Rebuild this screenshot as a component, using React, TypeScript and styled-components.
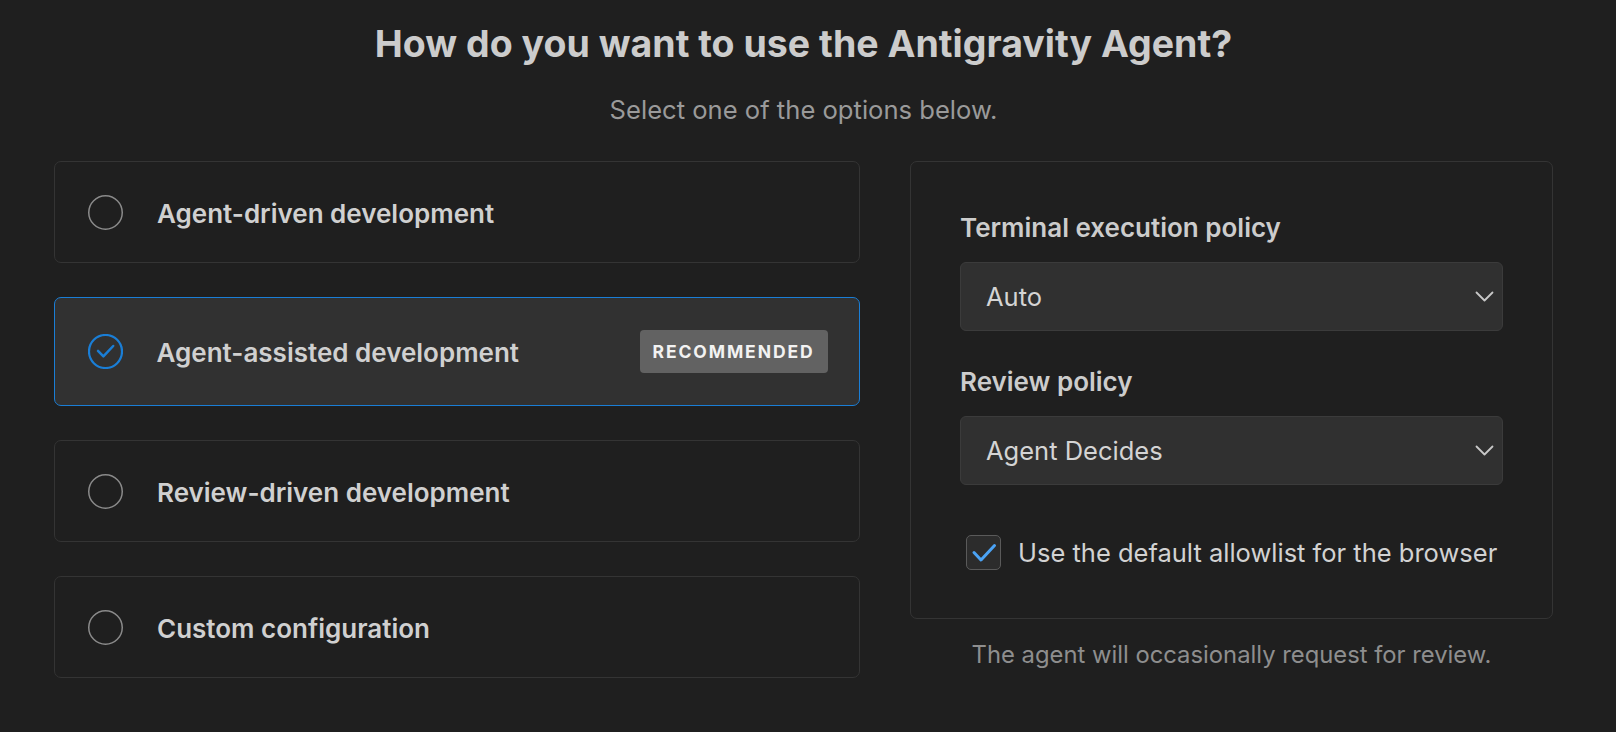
import React from 'react';
import styled, { createGlobalStyle } from 'styled-components';

const GlobalStyle = createGlobalStyle`
  body {
    margin: 0;
    background: #1f1f1f;
    font-family: Inter, "Noto Sans", sans-serif;
  }
`;

const Page = styled.div`
  width: 1499px;
  margin-left: 54px;
  padding-top: 21px;
  color: #cccccc;
`;

const Title = styled.h1`
  margin: 0;
  text-align: center;
  font-size: 37.5px;
  line-height: 46px;
  font-weight: 700;
  color: #cccccc;
`;

const Subtitle = styled.p`
  margin: 27px 0 0;
  text-align: center;
  font-size: 25.6px;
  line-height: 32px;
  color: #9a9a9a;
`;

const Columns = styled.div`
  display: grid;
  grid-template-columns: 806px 643px;
  column-gap: 50px;
  align-items: start;
  margin-top: 35px;
`;

const OptionList = styled.div`
  display: flex;
  flex-direction: column;
  gap: 34px;
`;

const OptionCard = styled.div<{ $selected?: boolean }>`
  display: flex;
  align-items: center;
  gap: 34px;
  min-height: 36px;
  padding: ${(p) => (p.$selected ? '32px 31.5px 32px 32.5px' : '32px 32px 32px 33px')};
  border: ${(p) => (p.$selected ? '1.5px solid #1a7ed6' : '1px solid #343434')};
  border-radius: 7px;
  background: ${(p) => (p.$selected ? '#313131' : '#1f1f1f')};
`;

const OptionLabel = styled.span`
  flex: 1;
  padding-top: 3px;
  font-size: 26px;
  line-height: 32px;
  font-weight: 600;
  color: #d0d0d0;
`;

const Badge = styled.span`
  padding: 0 13px;
  height: 43px;
  display: flex;
  align-items: center;
  border-radius: 4px;
  background: #626262;
  color: #f2f2f2;
  font-size: 17.5px;
  font-weight: 700;
  letter-spacing: 1.9px;
`;

const RightColumn = styled.div`
  display: flex;
  flex-direction: column;
`;

const Panel = styled.div`
  display: flex;
  flex-direction: column;
  padding: 50px 49px 48px;
  border: 1px solid #343434;
  border-radius: 7px;
`;

const Field = styled.div`
  display: flex;
  flex-direction: column;
  gap: 18px;
  & + & {
    margin-top: 35px;
  }
`;

const FieldLabel = styled.label`
  font-size: 26px;
  line-height: 32px;
  font-weight: 600;
  color: #cccccc;
`;

const Select = styled.div`
  display: flex;
  align-items: center;
  justify-content: space-between;
  height: 67px;
  padding: 0 8px 0 25px;
  border: 1px solid #3b3b3b;
  border-radius: 6px;
  background: #303030;
  font-size: 25.5px;
  color: #d4d4d4;
`;

const CheckRow = styled.div`
  display: flex;
  align-items: center;
  gap: 17px;
  margin-top: 50px;
  padding-left: 6px;
  font-size: 25.5px;
  line-height: 32px;
  color: #d2d2d2;
  white-space: nowrap;
`;

const CheckBox = styled.span`
  flex-shrink: 0;
  width: 33px;
  height: 33px;
  border: 1px solid #5a5a5a;
  border-radius: 5px;
  background: #2c2c2c;
  display: flex;
  align-items: center;
  justify-content: center;
`;

const Footnote = styled.p`
  margin: 21px 0 0;
  text-align: center;
  font-size: 23.8px;
  line-height: 30px;
  color: #8e8e8e;
`;

const Radio = ({ checked }: { checked?: boolean }) => (
  <svg width="35" height="35" viewBox="0 0 35 35" style={{ flexShrink: 0 }}>
    <circle
      cx="17.5"
      cy="17.5"
      r={checked ? 16.5 : 16.75}
      fill="none"
      stroke={checked ? '#1a7ed6' : '#8a8a8a'}
      strokeWidth={checked ? 2.2 : 1.5}
    />
    {checked && (
      <path d="M10 16.8 L15.4 22.4 L25.2 12" fill="none" stroke="#1a7ed6" strokeWidth="2.5" strokeLinecap="round" strokeLinejoin="round" />
    )}
  </svg>
);

const Chevron = () => (
  <svg width="19" height="11" viewBox="0 0 19 11">
    <path d="M1.5 1.5 L9.5 9.5 L17.5 1.5" fill="none" stroke="#c8c8c8" strokeWidth="1.8" strokeLinecap="round" strokeLinejoin="round" />
  </svg>
);

const options = [
  { label: 'Agent-driven development' },
  { label: 'Agent-assisted development', selected: true, badge: 'RECOMMENDED' },
  { label: 'Review-driven development' },
  { label: 'Custom configuration' },
];

const App: React.FC = () => {
  return (
    <>
      <GlobalStyle />
      <Page>
        <Title>How do you want to use the Antigravity Agent?</Title>
        <Subtitle>Select one of the options below.</Subtitle>
        <Columns>
          <OptionList>
            {options.map((o) => (
              <OptionCard key={o.label} $selected={o.selected}>
                <Radio checked={o.selected} />
                <OptionLabel>{o.label}</OptionLabel>
                {o.badge && <Badge>{o.badge}</Badge>}
              </OptionCard>
            ))}
          </OptionList>
          <RightColumn>
            <Panel>
              <Field>
                <FieldLabel>Terminal execution policy</FieldLabel>
                <Select>
                  <span>Auto</span>
                  <Chevron />
                </Select>
              </Field>
              <Field>
                <FieldLabel>Review policy</FieldLabel>
                <Select>
                  <span>Agent Decides</span>
                  <Chevron />
                </Select>
              </Field>
              <CheckRow>
                <CheckBox>
                  <svg width="26" height="20" viewBox="0 0 26 20">
                    <path d="M3 9.5 L10 17 L23.5 2.5" fill="none" stroke="#4ba3f5" strokeWidth="3" strokeLinecap="round" strokeLinejoin="round" />
                  </svg>
                </CheckBox>
                <span>Use the default allowlist for the browser</span>
              </CheckRow>
            </Panel>
            <Footnote>The agent will occasionally request for review.</Footnote>
          </RightColumn>
        </Columns>
      </Page>
    </>
  );
};

export default App;
